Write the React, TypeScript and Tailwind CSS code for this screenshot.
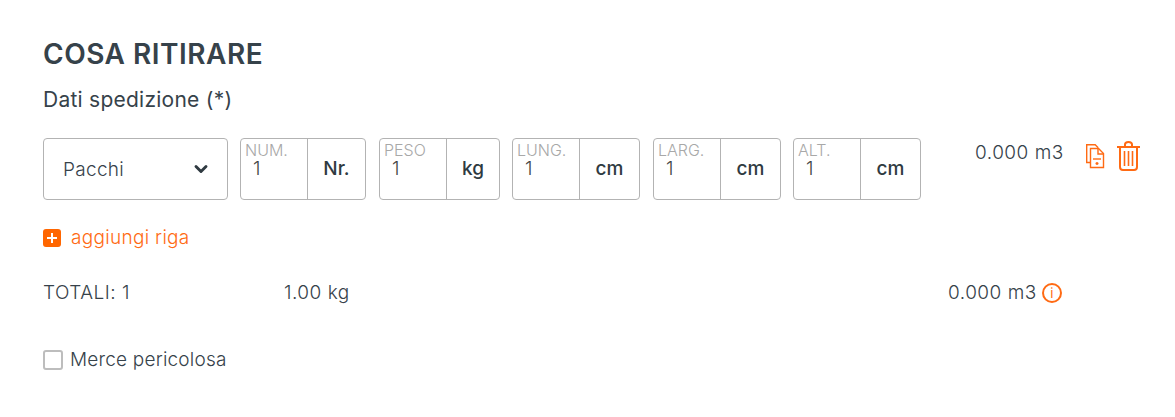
import { ChevronDown } from "lucide-react";

const fields = [
  { label: "NUM.", unit: "Nr.", box: "w-[126px]", mr: "mr-[13px]" },
  { label: "PESO", unit: "kg", box: "w-[121px]", mr: "mr-[12px]" },
  { label: "LUNG.", unit: "cm", box: "w-[128px]", mr: "mr-[13px]" },
  { label: "LARG.", unit: "cm", box: "w-[128px]", mr: "mr-[12px]" },
  { label: "ALT.", unit: "cm", box: "w-[128px]", mr: "" },
];

function Field({ label, unit, box, mr }: (typeof fields)[number]) {
  return (
    <div className={`flex h-[62px] rounded border border-[#b3b3b3] ${box} ${mr}`}>
      <div className="relative w-[67px] border-r border-[#b3b3b3]">
        <span className="absolute left-[4px] top-[3px] text-[16px] font-light leading-[16px] text-[#a8a8a8]">{label}</span>
        <span className="absolute left-[12px] top-[20px] text-[19px] font-light leading-[20px] text-[#444]">1</span>
      </div>
      <div className="flex flex-1 items-center justify-center text-[19px] font-medium text-[#2f3a41]">{unit}</div>
    </div>
  );
}

export default function App() {
  return (
    <div className="h-[417px] w-[1175px] overflow-hidden bg-white pl-[43px] pt-[36px] font-['Inter',sans-serif] font-light text-[#36424a]">
      <h1 className="text-[28px] font-semibold leading-[36px] tracking-[0.5px]">COSA RITIRARE</h1>
      <h2 className="mt-[14px] text-[21px] font-normal leading-[28px] tracking-[0.25px]">Dati spedizione (*)</h2>

      {/* riga collo */}
      <div className="mt-[24px] flex items-start">
        <div className="mr-[12px] flex h-[62px] w-[185px] items-center justify-between rounded border border-[#b3b3b3] pl-[19px] pr-[16px]">
          <span className="translate-y-[1px] text-[19px] tracking-[0.3px]">Pacchi</span>
          <ChevronDown size={20} strokeWidth={3.5} className="text-[#2f3a41]" />
        </div>
        {fields.map((f) => (
          <Field key={f.label} {...f} />
        ))}
        <span className="ml-[54px] mt-[2px] w-[89px] whitespace-nowrap text-[19px] leading-[26px] tracking-[0.5px]">0.000 m3</span>
        <svg className="ml-[21px] mt-[5px]" width="20" height="26" viewBox="0 0 20 26" fill="none" stroke="#ff6a13" strokeWidth="1.4">
          <path d="M5 19.500H1.700V1.700h8.500l3 3" />
          <path d="M5.500 5.500h8l5 5v14h-13z" />
          <path d="M13 5.500v5.500h5.500" />
          <path d="M8 16h8" />
          <path d="M10.500 20.500h3M12 19v3" />
        </svg>
        <svg className="ml-[11px] mt-[3px]" width="25" height="30" viewBox="0 0 25 30" fill="none" stroke="#ff6a13" strokeWidth="2">
          <path d="M1 6h23" />
          <path d="M9 6V3.500a3.500 2.500 0 0 1 7 0V6" />
          <path d="M4 6v20a3 3 0 0 0 3 3h11a3 3 0 0 0 3-3V6" />
          <path d="M8.500 10v15M12.500 10v15M16.500 10v15" strokeWidth="1.600" />
        </svg>
      </div>

      <button className="mt-[27px] flex items-center text-[19px] font-light leading-[22px] tracking-[0.3px] text-[#ff6a13]">
        <span className="mr-[10px] flex h-[18px] w-[18px] items-center justify-center rounded-[3px] bg-[#ff6600]">
          <svg width="10" height="10" viewBox="0 0 10 10" stroke="#fff" strokeWidth="2">
            <path d="M5 0v10M0 5h10" />
          </svg>
        </span>
        aggiungi riga
      </button>

      <div className="mt-[31px] flex h-[26px] items-center text-[19px] tracking-[0.5px]">
        <span className="w-[241px]">TOTALI: 1</span>
        <span className="w-[664px]">1.00 kg</span>
        <span className="w-[94px] whitespace-nowrap">0.000 m3</span>
        <span className="flex h-[20px] w-[20px] items-center justify-center rounded-full border-2 border-[#ff6a13] text-[13px] font-normal leading-none text-[#ff6a13]">i</span>
      </div>

      <label className="mt-[42px] flex items-center text-[19px] leading-[24px] tracking-[0.2px]">
        <span className="mr-[7px] h-[20px] w-[20px] rounded-[3px] border-2 border-[#bdbdbd]" />
        Merce pericolosa
      </label>
    </div>
  );
}
